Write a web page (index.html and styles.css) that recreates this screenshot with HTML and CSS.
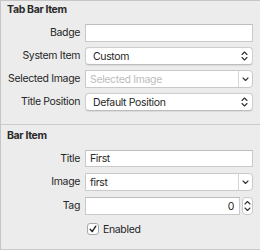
FILE: index.html
```html
<!DOCTYPE html>
<html lang="en">
<head>
  <meta charset="UTF-8" />
  <title>Tab Bar Item</title>
  <link rel="stylesheet" href="styles.css">
</head>
<body>
  <div class="inspector">
    <section class="group group-tab">
      <h2 class="group-title">Tab Bar Item</h2>
      <div class="form">
        <span class="label">Badge</span>
        <div class="field"></div>

        <span class="label">System Item</span>
        <div class="popup">
          <span class="popup-text">Custom</span>
          <svg class="updown" width="7" height="10" viewBox="0 0 7 10"><path d="M1 3.5 L3.5 1 L6 3.5 M1 6.5 L3.5 9 L6 6.5" fill="none" stroke="#333" stroke-width="1.1" stroke-linecap="round" stroke-linejoin="round"/></svg>
        </div>

        <span class="label">Selected Image</span>
        <div class="combo">
          <span class="combo-text placeholder">Selected Image</span>
          <span class="combo-btn">
            <svg width="7" height="5" viewBox="0 0 7 5"><path d="M1 1 L3.5 3.5 L6 1" fill="none" stroke="#333" stroke-width="1.1" stroke-linecap="round" stroke-linejoin="round"/></svg>
          </span>
        </div>

        <span class="label">Title Position</span>
        <div class="popup">
          <span class="popup-text">Default Position</span>
          <svg class="updown" width="7" height="10" viewBox="0 0 7 10"><path d="M1 3.5 L3.5 1 L6 3.5 M1 6.5 L3.5 9 L6 6.5" fill="none" stroke="#333" stroke-width="1.1" stroke-linecap="round" stroke-linejoin="round"/></svg>
        </div>
      </div>
    </section>

    <section class="group group-bar">
      <h2 class="group-title">Bar Item</h2>
      <div class="form">
        <span class="label">Title</span>
        <div class="field"><span class="field-text">First</span></div>

        <span class="label">Image</span>
        <div class="combo">
          <span class="combo-text">first</span>
          <span class="combo-btn">
            <svg width="7" height="5" viewBox="0 0 7 5"><path d="M1 1 L3.5 3.5 L6 1" fill="none" stroke="#333" stroke-width="1.1" stroke-linecap="round" stroke-linejoin="round"/></svg>
          </span>
        </div>

        <span class="label">Tag</span>
        <div class="tag-row">
          <div class="field field-number"><span class="field-text">0</span></div>
          <div class="stepper">
            <svg width="7" height="12" viewBox="0 0 7 12"><path d="M1 4 L3.5 1.5 L6 4 M1 8 L3.5 10.5 L6 8" fill="none" stroke="#333" stroke-width="1.1" stroke-linecap="round" stroke-linejoin="round"/></svg>
          </div>
        </div>

        <span class="label"></span>
        <label class="check">
          <span class="check-box">
            <svg width="10" height="10" viewBox="0 0 10 10"><path d="M2.2 5.2 L4.2 7.6 L7.8 2.2" fill="none" stroke="#222" stroke-width="1.4" stroke-linecap="round" stroke-linejoin="round"/></svg>
          </span>
          <span class="check-text">Enabled</span>
        </label>
      </div>
    </section>
  </div>
</body>
</html>
```

FILE: styles.css
```css
* {
  box-sizing: border-box;
  margin: 0;
  padding: 0;
}

body {
  font-family: 'Inter', 'Noto Sans', sans-serif;
  font-size: 10.5px;
  letter-spacing: -0.35px;
  color: #262626;
  background-color: #ececec;
  width: 260px;
  height: 250px;
  overflow: hidden;
}

.inspector {
  border-left: 1px solid #c6c6c6;
  border-top: 1px solid #c6c6c6;
  height: 250px;
}

.group {
  padding-left: 6px;
}

.group-tab {
  padding-top: 2px;
  padding-bottom: 13px;
}

.group-bar {
  border-top: 1px solid #cbcbcb;
  border-bottom: 1px solid #cbcbcb;
  padding-top: 4px;
  padding-bottom: 12px;
}

.group-title {
  font-size: 10.5px;
  font-weight: 700;
  line-height: 14px;
  color: #2a2a2a;
  margin-bottom: 7px;
}

.form {
  display: grid;
  grid-template-columns: 73px 168px;
  grid-auto-rows: 18px;
  column-gap: 5px;
  row-gap: 5px;
}

.group-bar .form {
  grid-template-rows: 17px 18px 18px 16px;
  row-gap: 6px;
}

.label {
  text-align: right;
  line-height: 18px;
  white-space: nowrap;
}

.field {
  background-color: #fff;
  border: 1px solid #c9c9c9;
  border-top-color: #bdbdbd;
  display: flex;
  align-items: center;
  padding: 0 4px;
}

.field-number {
  flex: 1;
  justify-content: flex-end;
  padding-right: 5px;
}

.popup {
  background-color: #fff;
  border: 1px solid #cfcfcf;
  border-bottom-color: #bdbdbd;
  border-radius: 4px;
  box-shadow: 0 0.5px 1px rgba(0, 0, 0, 0.08);
  display: flex;
  align-items: center;
  justify-content: space-between;
  padding: 0 4px 0 7px;
}

.combo {
  display: flex;
  background-color: #fff;
  border: 1px solid #c9c9c9;
  border-radius: 0 4px 4px 0;
}

.combo-text {
  flex: 1;
  display: flex;
  align-items: center;
  padding: 0 4px;
}

.placeholder {
  color: #bdbdbd;
}

.combo-btn {
  width: 14px;
  border-left: 1px solid #d6d6d6;
  display: flex;
  align-items: center;
  justify-content: center;
}

.tag-row {
  display: flex;
  gap: 2px;
}

.stepper {
  width: 11px;
  background-color: #fff;
  border: 1px solid #c9c9c9;
  border-radius: 4px;
  display: flex;
  align-items: center;
  justify-content: center;
}

.check {
  display: flex;
  align-items: center;
  gap: 4px;
  padding-left: 2px;
}

.check-box {
  width: 12px;
  height: 12px;
  background-color: #fff;
  border: 1px solid #a9a9a9;
  border-radius: 3px;
  display: flex;
  align-items: center;
  justify-content: center;
}
```
